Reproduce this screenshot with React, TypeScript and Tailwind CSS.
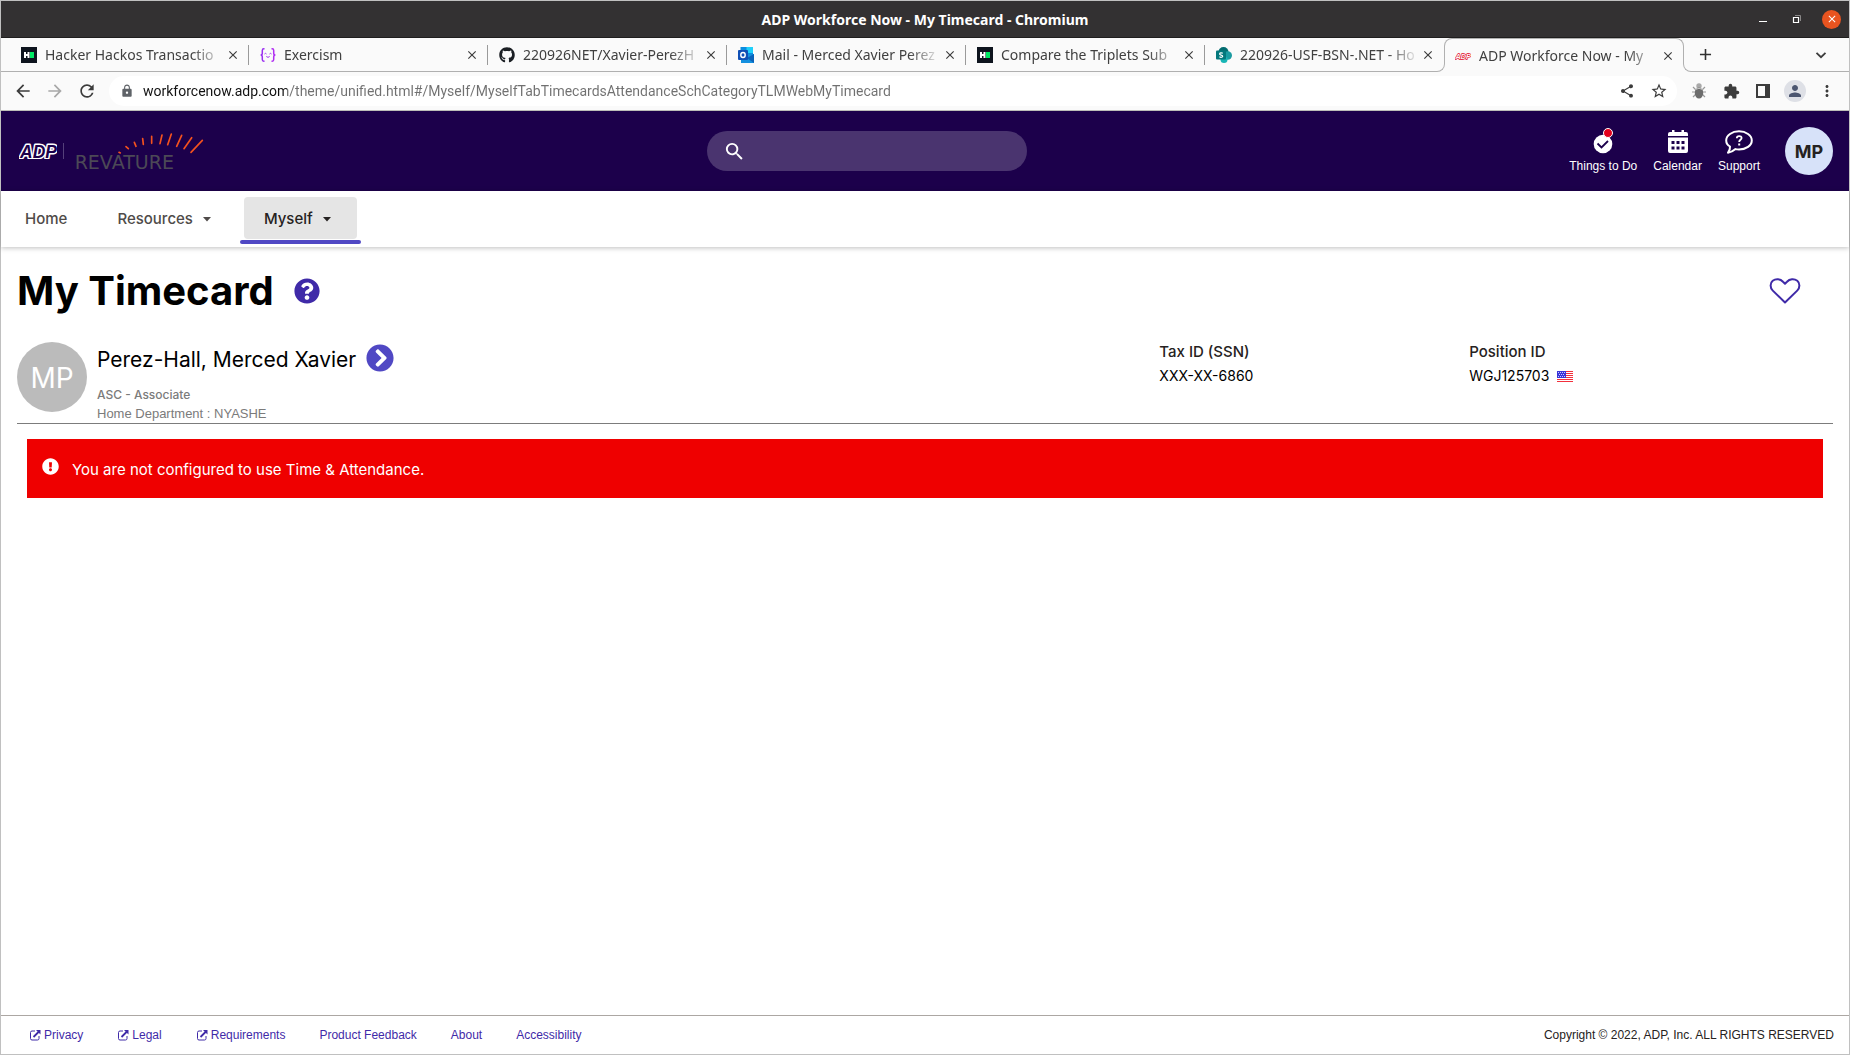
import type { ReactNode } from "react";
import {
  MdAdd,
  MdArrowBack,
  MdArrowForward,
  MdClose,
  MdExtension,
  MdLock,
  MdMoreVert,
  MdPerson,
  MdRefresh,
  MdSearch,
  MdShare,
  MdStarOutline,
} from "react-icons/md";
import { FaChevronCircleRight, FaExclamationCircle, FaGithub, FaQuestionCircle } from "react-icons/fa";

/* ---------- Favicons ---------- */

function HackerRankIcon() {
  return (
    <svg viewBox="0 0 16 16" className="size-4 shrink-0" aria-hidden="true">
      <rect width="16" height="16" fill="#0e141e" />
      <path d="M3 5h2v2h1.500V5h2v6h-2V9H5v2H3z" fill="#fff" />
      <rect x="9" y="5" width="4" height="6" fill="#00ea64" />
    </svg>
  );
}

function ExercismIcon() {
  return (
    <svg viewBox="0 0 16 16" className="size-4 shrink-0" fill="none" strokeWidth="1.500" aria-hidden="true">
      <path d="M4.500 1.800H3.800C2.600 1.800 2.300 2.500 2.300 3.500v2.700C2.300 7.400 1.800 8 .6 8c1.200 0 1.700.7 1.700 1.900v2.700c0 1 .4 1.700 1.500 1.700h.7" stroke="#9a2ff0" />
      <path d="M11.500 1.800h.7c1.200 0 1.500.7 1.500 1.700v2.700c0 1.200.5 1.800 1.700 1.800-1.200 0-1.700.7-1.700 1.900v2.700c0 1-.4 1.700-1.500 1.700h-.7" stroke="#b02df2" />
      <path d="M4.500 7q1-1.300 2 0M9.500 7q1-1.300 2 0M6.300 9.500q1.700 1.700 3.400 0" stroke="#a12ef1" strokeWidth="1" />
    </svg>
  );
}

function OutlookIcon() {
  return (
    <svg viewBox="0 0 16 16" className="size-4 shrink-0" aria-hidden="true">
      <rect x="2.500" y="0" width="12.500" height="12" fill="#0a8de0" />
      <rect x="8.500" y="0" width="6.500" height="6" fill="#1fd0fa" />
      <path d="M3 8l13-1v9H3z" fill="#1490df" />
      <path d="M16 7v9L9 11z" fill="#0a62b9" />
      <rect x="0" y="3" width="10" height="10" rx="1" fill="#0f4fb5" />
      <ellipse cx="5" cy="8" rx="2.200" ry="2.500" fill="none" stroke="#fff" strokeWidth="1.400" />
    </svg>
  );
}

function SharePointIcon() {
  return (
    <svg viewBox="0 0 16 16" className="size-4 shrink-0" aria-hidden="true">
      <circle cx="7.500" cy="5" r="5" fill="#036c70" />
      <circle cx="11.800" cy="8.500" r="4.200" fill="#1a9ba1" />
      <circle cx="8" cy="12.500" r="3.500" fill="#18b5b5" />
      <rect x="0" y="3.500" width="10" height="9" rx="1" fill="#03787c" />
      <path d="M6.800 6.300C5.600 5.600 3.600 5.700 3.600 7c0 1.400 3.100.8 3.100 2.200 0 1.200-2 1.400-3.300.6" fill="none" stroke="#fff" strokeWidth="1.200" />
    </svg>
  );
}

function AdpMark({ className, ink, ground }: { className: string; ink: string; ground: string }) {
  return (
    <svg viewBox="0 0 38 16" className={className} role="img" aria-label="ADP">
      <text
        x="1"
        y="14.500"
        fontFamily="Liberation Sans, sans-serif"
        fontWeight="700"
        fontStyle="italic"
        fontSize="17.500"
        fill={ground}
        stroke={ink}
        strokeWidth="3"
        strokeLinejoin="round"
        paintOrder="stroke fill"
      >
        ADP
      </text>
    </svg>
  );
}

/* ---------- Window chrome ---------- */

function TitleBar() {
  return (
    <div className="grid h-[37px] grid-cols-[1fr_auto_1fr] items-center border-b border-[#1f1e1e] bg-[#333132] px-2">
      <span />
      <h1 className="pt-px text-sm font-bold text-white">ADP Workforce Now - My Timecard - Chromium</h1>
      <div className="flex items-center justify-end text-white">
        <button type="button" aria-label="Minimize" className="flex size-[34px] items-center justify-center">
          <svg viewBox="0 0 10 10" className="size-[10px]" aria-hidden="true">
            <path d="M1 7.500h8" stroke="currentColor" strokeWidth="1" />
          </svg>
        </button>
        <button type="button" aria-label="Restore" className="flex size-[34px] items-center justify-center">
          <svg viewBox="0 0 10 10" className="size-[10px]" fill="none" aria-hidden="true">
            <path d="M3 1.500h5.500V7" stroke="#8a8888" />
            <path d="M1.500 3.500h5v5h-5z" stroke="currentColor" strokeWidth="1.200" />
          </svg>
        </button>
        <button type="button" aria-label="Close window" className="ml-2 flex size-[19px] items-center justify-center rounded-full bg-[#e95420]">
          <MdClose className="size-3" />
        </button>
      </div>
    </div>
  );
}

type TabData = { title: string; icon: ReactNode };

const tabs: TabData[] = [
  { title: "Hacker Hackos Transactio", icon: <HackerRankIcon /> },
  { title: "Exercism", icon: <ExercismIcon /> },
  { title: "220926NET/Xavier-PerezH", icon: <FaGithub className="size-4 shrink-0 text-[#1b1f24]" /> },
  { title: "Mail - Merced Xavier Perez", icon: <OutlookIcon /> },
  { title: "Compare the Triplets Sub", icon: <HackerRankIcon /> },
  { title: "220926-USF-BSN-.NET - Ho", icon: <SharePointIcon /> },
];

function TabBody({ title, icon }: TabData) {
  return (
    <>
      {icon}
      <span className="min-w-0 flex-1 overflow-hidden whitespace-nowrap [mask-image:linear-gradient(to_right,black_calc(100%-32px),transparent)]">
        {title}
      </span>
      <button type="button" aria-label={`Close ${title}`} className="-ml-[7px] flex size-4 shrink-0 items-center justify-center text-[#3c3c3c]">
        <MdClose className="size-[14px]" />
      </button>
    </>
  );
}

function TabStrip() {
  return (
    <div className="flex h-[34px] shrink-0 bg-[#fafafa] text-sm text-[#404040]">
      <div className="w-[9px] shrink-0 border-b border-[#b0b0b0]" />
      {tabs.map((tab, i) => (
        <div key={tab.title} className="flex w-[239px] min-w-0 items-center border-b border-[#b0b0b0]">
          <div
            className={
              i === tabs.length - 1
                ? "flex h-5 min-w-0 flex-1 items-center gap-2 pr-2 pl-[11px]"
                : "flex h-5 min-w-0 flex-1 items-center gap-2 border-r border-[#9a9a9a] pr-[7px] pl-[11px]"
            }
          >
            <TabBody {...tab} />
          </div>
        </div>
      ))}
      <div className="relative flex w-[240px] min-w-0 items-center gap-2 rounded-t-lg border border-b-0 border-[#b0b0b0] pr-[7px] pl-[10px]">
        <span className="absolute bottom-0 -left-[9px] size-[9px] bg-[#fafafa]">
          <span className="block size-full rounded-br-lg border-r border-b border-[#b0b0b0]" />
        </span>
        <TabBody
          title="ADP Workforce Now - My"
          icon={<AdpMark className="h-2 w-4 shrink-0" ink="#e2001a" ground="#fafafa" />}
        />
        <span className="absolute -right-[9px] bottom-0 size-[9px] bg-[#fafafa]">
          <span className="block size-full rounded-bl-lg border-b border-l border-[#b0b0b0]" />
        </span>
      </div>
      <div className="flex flex-1 items-center justify-between border-b border-[#b0b0b0] pr-4 pl-[11px]">
        <button type="button" aria-label="New tab" className="flex size-5 items-center justify-center text-[#303030]">
          <MdAdd className="size-[19px]" />
        </button>
        <button type="button" aria-label="Search tabs" className="flex size-6 items-center justify-center">
          <svg viewBox="0 0 12 12" className="size-3" fill="none" aria-hidden="true">
            <path d="M1.500 3.800L6 8.200l4.500-4.400" stroke="#3c3c3c" strokeWidth="1.800" />
          </svg>
        </button>
      </div>
    </div>
  );
}

function ToolButton({ label, children }: { label: string; children: ReactNode }) {
  return (
    <button type="button" aria-label={label} className="flex size-8 shrink-0 items-center justify-center">
      {children}
    </button>
  );
}

function BugIcon() {
  return (
    <svg viewBox="0 0 16 16" className="size-4" aria-hidden="true">
      <path d="M2 4l3 3M14 4l-3 3M1 9h4M15 9h-4M2 14l3-3M14 14l-3-3" stroke="#9a9a9a" strokeWidth="1.200" fill="none" />
      <circle cx="8" cy="3" r="2.700" fill="#a9a9a9" />
      <ellipse cx="8" cy="10" rx="4.200" ry="5.500" fill="#6c6c6c" />
      <path d="M4.500 6.500q3.500-2.500 7 0" stroke="#c9c9c9" fill="none" />
    </svg>
  );
}

function Toolbar() {
  return (
    <div className="flex h-[39px] shrink-0 items-center border-b border-[#bdbdb8] bg-[#fafafa] px-[6px] text-[#3c3c3c]">
      <ToolButton label="Back">
        <MdArrowBack className="size-5" />
      </ToolButton>
      <ToolButton label="Forward">
        <MdArrowForward className="size-5 text-[#a8a8a8]" />
      </ToolButton>
      <ToolButton label="Reload">
        <MdRefresh className="size-5" />
      </ToolButton>
      <div className="ml-[6px] flex h-[30px] min-w-0 flex-1 items-center rounded-full bg-white pr-[2px] pl-[11px]">
        <MdLock className="mr-[9px] size-[14px] shrink-0 text-[#5f6368]" />
        <input
          type="text"
          aria-label="Address"
          defaultValue="workforcenow.adp.com/theme/unified.html#/Myself/MyselfTabTimecardsAttendanceSchCategoryTLMWebMyTimecard"
          className="min-w-0 flex-1 bg-linear-[to_right,#111111_144px,#707070_144px] bg-clip-text font-['Roboto',sans-serif] text-sm text-transparent outline-none"
        />
        <ToolButton label="Share">
          <MdShare className="size-4" />
        </ToolButton>
        <ToolButton label="Bookmark">
          <MdStarOutline className="size-[18px]" />
        </ToolButton>
      </div>
      <div className="ml-[6px] flex items-center">
        <ToolButton label="Debugger extension">
          <BugIcon />
        </ToolButton>
        <ToolButton label="Extensions">
          <MdExtension className="size-[17px]" />
        </ToolButton>
        <ToolButton label="Side panel">
          <svg viewBox="0 0 14 14" className="size-[14px]" aria-hidden="true">
            <path d="M0 0h14v14H0zM2 2v10h7V2z" fill="currentColor" fillRule="evenodd" />
          </svg>
        </ToolButton>
        <ToolButton label="Profile">
          <span className="flex size-[22px] items-center justify-center rounded-full bg-[#dee0e6] text-[#4c5670]">
            <MdPerson className="size-[18px]" />
          </span>
        </ToolButton>
        <ToolButton label="Menu">
          <MdMoreVert className="size-[18px]" />
        </ToolButton>
      </div>
    </div>
  );
}

/* ---------- ADP application ---------- */

function RevatureLogo() {
  return (
    <svg viewBox="195 36 390 114" className="h-[38px] w-[130px]" role="img" aria-label="Revature">
      <path
        d="M327 97l4 2M348 80l7 6M373 67l5 12M398 56l2 17M425 49v21M456 45l-6 26M484 42l-11 32M515 46l-15 33M545 53l-23 33M577 61l-34 36"
        stroke="#f4511e"
        strokeWidth="5"
        strokeLinecap="round"
        fill="none"
      />
      <text x="194" y="146" fontFamily="DejaVu Sans, sans-serif" fontSize="57" fill="#4c4956">
        REVATURE
      </text>
    </svg>
  );
}

function HeaderAction({ label, children }: { label: string; children: ReactNode }) {
  return (
    <button type="button" className="flex flex-col items-center gap-1 pb-px text-xs leading-4 whitespace-nowrap">
      <span className="flex h-[26px] items-end">{children}</span>
      {label}
    </button>
  );
}

function AppHeader() {
  return (
    <header className="grid h-20 shrink-0 grid-cols-[706fr_320px_822fr] items-center bg-[#1c004b] text-white">
      <div className="flex items-center pl-[18px]">
        <AdpMark className="h-4 w-[38px]" ink="#ffffff" ground="#1c004b" />
        <span className="ml-[6px] h-4 w-px bg-[#54407a]" />
        <span className="ml-[11px] pb-px">
          <RevatureLogo />
        </span>
      </div>
      <label className="flex h-10 items-center rounded-full bg-[#4a346f] px-4">
        <MdSearch className="size-[23px] shrink-0" />
        <input type="search" aria-label="Search" className="min-w-0 flex-1 bg-transparent px-2 text-sm outline-none" />
      </label>
      <div className="flex items-center justify-end gap-4 pr-4">
        <HeaderAction label="Things to Do">
          <svg viewBox="0 0 20 26" className="h-[26px] w-5" aria-hidden="true">
            <circle cx="10" cy="16" r="9.300" fill="#fff" />
            <path d="M4.500 15.500l4 4 6.500-6.500" stroke="#1c004b" strokeWidth="1.800" fill="none" />
            <circle cx="15" cy="5" r="4.500" fill="#e3001b" stroke="#fff" />
          </svg>
        </HeaderAction>
        <HeaderAction label="Calendar">
          <svg viewBox="0 0 22 24" className="h-6 w-[22px]" aria-hidden="true">
            <path d="M3 2h2V0h2.500v2h7V0H17v2h2q2 0 2 2v2H1V4q0-2 2-2z" fill="#fff" />
            <path
              fillRule="evenodd"
              fill="#fff"
              d="M1 7.500h20V21q0 2-2 2H3q-2 0-2-2zM4.500 11v3h3v-3zM9.500 11v3h3v-3zM14.500 11v3h3v-3zM4.500 16.500v3h3v-3zM9.500 16.500v3h3v-3zM14.500 16.500v3h3v-3z"
            />
          </svg>
        </HeaderAction>
        <HeaderAction label="Support">
          <svg viewBox="0 0 28 24" className="h-6 w-7" fill="none" stroke="#fff" aria-hidden="true">
            <path
              d="M5 16.500C2.500 15 1.200 12.800 1.200 10.400 1.200 5.400 7 1.300 14 1.300s12.800 4.100 12.800 9.100S21 19.500 14 19.500c-1.200 0-2.400-.1-3.500-.4-2 1.800-4.200 3.200-7.500 3.600C4.500 21 5.200 19 5 16.500z"
              strokeWidth="2"
              strokeLinejoin="round"
            />
            <path d="M11.800 8.300c0-3 4.800-2.900 4.800-.2 0 1.800-2.400 1.700-2.400 3.900" strokeWidth="1.800" />
            <path d="M14.200 13.500v2" strokeWidth="2" />
          </svg>
        </HeaderAction>
        <button type="button" aria-label="Account MP" className="ml-[9px] flex size-12 items-center justify-center rounded-full bg-[#d7e2f9] pt-px font-['Inter',sans-serif] text-lg font-bold text-[#262221]">
          MP
        </button>
      </div>
    </header>
  );
}

function Caret() {
  return (
    <svg viewBox="0 0 8 5" className="h-[5px] w-2" aria-hidden="true">
      <path d="M0 0h8L4 4.500z" fill="currentColor" />
    </svg>
  );
}

function NavBar() {
  return (
    <nav className="flex h-14 shrink-0 items-start bg-white pl-1 font-['Inter',sans-serif] text-[15px] font-medium text-[#4f4b49] shadow-[0_1px_5px_rgba(0,0,0,0.25)]">
      <a href="#home" className="mt-[6px] flex h-[42px] items-center px-5 pt-[3px]">
        Home
      </a>
      <button type="button" className="mt-[6px] ml-[10px] flex h-[42px] items-center gap-[10px] px-5 pt-[3px]">
        Resources
        <Caret />
      </button>
      <div className="ml-[9px] px-1 pt-[6px]">
        <button type="button" className="flex h-[42px] items-center gap-[10px] rounded bg-[#e5e5e5] pt-[3px] pr-[26px] pl-5 text-[#262221]">
          Myself
          <Caret />
        </button>
        <div className="-mx-1 mt-px h-1 rounded-full bg-[#5048c4]" />
      </div>
    </nav>
  );
}

function UsFlag() {
  return (
    <svg viewBox="0 0 16 11" className="h-[11px] w-4" role="img" aria-label="United States">
      <rect width="16" height="11" fill="#fff" />
      <path d="M0 .5h16M0 2.500h16M0 4.500h16M0 6.500h16M0 8.500h16M0 10.500h16" stroke="#f2303c" />
      <rect width="9" height="7" fill="#3a35d8" />
      <path d="M1 1.500h7M2 3.500h6M1 5.500h7" stroke="#c9c8ff" strokeDasharray="1 1" />
    </svg>
  );
}

function EmployeeSummary() {
  return (
    <section className="mt-[19px] grid grid-cols-[1143fr_310fr_364fr] border-b border-[#7c7c7c]">
      <div className="flex gap-[10px]">
        <div className="flex size-[70px] shrink-0 items-center justify-center rounded-full bg-[#bbbbbb] pt-px font-['Inter',sans-serif] text-[28px] text-white">
          MP
        </div>
        <div className="text-[#7b7b7b]">
          <div className="flex h-8 items-center gap-[10px] font-['Inter',sans-serif] text-[21px] text-black">
            <h3 className="pt-[3px]">Perez-Hall, Merced Xavier</h3>
            <button type="button" aria-label="Next employee">
              <FaChevronCircleRight className="size-7 text-[#5048c4]" />
            </button>
          </div>
          <p className="mt-3 font-['Inter',sans-serif] text-xs leading-[18px] font-medium">ASC - Associate</p>
          <p className="text-[13px] leading-[19px]">Home Department : NYASHE</p>
        </div>
      </div>
      <dl className="font-['Inter',sans-serif]">
        <dt className="text-[15px] leading-5 font-medium text-[#262221]">Tax ID (SSN)</dt>
        <dd className="mt-1 text-sm text-black">XXX-XX-6860</dd>
      </dl>
      <dl className="font-['Inter',sans-serif]">
        <dt className="text-[15px] leading-5 font-medium text-[#262221]">Position ID</dt>
        <dd className="mt-1 flex items-center gap-2 text-sm text-black">
          WGJ125703
          <UsFlag />
        </dd>
      </dl>
    </section>
  );
}

function Main() {
  return (
    <main className="flex-1 px-4 pt-3">
      <div className="flex h-[64px] items-center justify-between">
        <div className="flex items-center gap-5">
          <h2 className="font-['Inter',sans-serif] text-[40px] font-bold text-black">My Timecard</h2>
          <button type="button" aria-label="Help">
            <FaQuestionCircle className="size-[26px] text-[#3f2aa8]" />
          </button>
        </div>
        <button type="button" aria-label="Add to favorites" className="mr-8">
          <svg viewBox="0 0 32 26" className="h-[26px] w-8" fill="none" aria-hidden="true">
            <path
              d="M16 24.500L3.800 12.600C.8 9.600 1 5 3.700 2.800c3.200-2.500 7.700-1.900 10.300.9l2 2 2-2c2.600-2.800 7.100-3.400 10.300-.9C31 5 31.200 9.600 28.200 12.600z"
              stroke="#3f2aa8"
              strokeWidth="2"
              strokeLinejoin="round"
            />
          </svg>
        </button>
      </div>
      <EmployeeSummary />
      <div role="alert" className="mx-[10px] mt-[15px] flex h-[59px] items-center gap-[13px] bg-[#ef0000] px-[15px] font-['Inter',sans-serif] text-[15px] text-white">
        <FaExclamationCircle className="mb-1 size-[17px]" />
        <p className="pt-1">You are not configured to use Time &amp; Attendance.</p>
      </div>
    </main>
  );
}

const footerLinks = [
  { label: "Privacy", external: true },
  { label: "Legal", external: true },
  { label: "Requirements", external: true },
  { label: "Product Feedback", external: false },
  { label: "About", external: false },
  { label: "Accessibility", external: false },
];

function Footer() {
  return (
    <footer className="flex h-[39px] shrink-0 items-center justify-between border-t border-[#aca7a3] pr-[15px] pl-7 text-xs">
      <nav className="flex gap-[34px] text-[#3f2aa8]">
        {footerLinks.map(({ label, external }) => (
          <a key={label} href={`#${label}`} className="flex items-center gap-[3px]">
            {external && (
              <svg viewBox="0 0 12 12" className="size-3" fill="none" stroke="currentColor" aria-hidden="true">
                <path d="M6 2H3Q1.500 2 1.500 3.500v6Q1.500 11 3 11h5.500Q10 11 10 9.500V7" />
                <path d="M4.500 8L10 2.500" strokeWidth="1.800" />
                <path d="M7 1h4.500v4.500z" fill="currentColor" stroke="none" />
              </svg>
            )}
            {label}
          </a>
        ))}
      </nav>
      <p className="text-[#262221]">Copyright © 2022, ADP, Inc. ALL RIGHTS RESERVED</p>
    </footer>
  );
}

export default function App() {
  return (
    <div className="flex min-h-screen flex-col border border-[#c0c0c0] bg-white font-['Noto_Sans',sans-serif]">
      <TitleBar />
      <TabStrip />
      <Toolbar />
      <div className="flex flex-1 flex-col font-['Liberation_Sans',sans-serif]">
        <AppHeader />
        <NavBar />
        <Main />
        <Footer />
      </div>
    </div>
  );
}
